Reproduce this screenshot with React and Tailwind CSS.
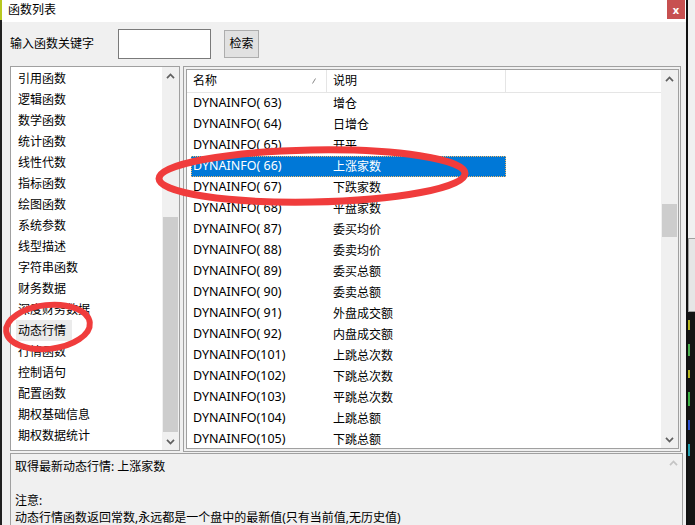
import React from "react";

const font = { fontFamily: '"Noto Sans", "Noto Sans CJK SC", sans-serif' };

const categories = [
  "引用函数",
  "逻辑函数",
  "数学函数",
  "统计函数",
  "线性代数",
  "指标函数",
  "绘图函数",
  "系统参数",
  "线型描述",
  "字符串函数",
  "财务数据",
  "深度财务数据",
  "动态行情",
  "行情函数",
  "控制语句",
  "配置函数",
  "期权基础信息",
  "期权数据统计",
];

const rows = [
  ["DYNAINFO( 63)", "增仓"],
  ["DYNAINFO( 64)", "日增仓"],
  ["DYNAINFO( 65)", "开平"],
  ["DYNAINFO( 66)", "上涨家数"],
  ["DYNAINFO( 67)", "下跌家数"],
  ["DYNAINFO( 68)", "平盘家数"],
  ["DYNAINFO( 87)", "委买均价"],
  ["DYNAINFO( 88)", "委卖均价"],
  ["DYNAINFO( 89)", "委买总额"],
  ["DYNAINFO( 90)", "委卖总额"],
  ["DYNAINFO( 91)", "外盘成交额"],
  ["DYNAINFO( 92)", "内盘成交额"],
  ["DYNAINFO(101)", "上跳总次数"],
  ["DYNAINFO(102)", "下跳总次数"],
  ["DYNAINFO(103)", "平跳总次数"],
  ["DYNAINFO(104)", "上跳总额"],
  ["DYNAINFO(105)", "下跳总额"],
];

function Chevron({ up, color = "#606060" }) {
  return (
    <svg width="9" height="6" viewBox="0 0 9 6">
      <path
        d={up ? "M1 5.2 L4.5 1.5 L8 5.2" : "M1 0.8 L4.5 4.5 L8 0.8"}
        fill="none"
        stroke={color}
        strokeWidth="1.7"
      />
    </svg>
  );
}

function ScrollBar({ spacer, thumb }) {
  return (
    <div className="w-[17px] h-full bg-[#f0f0f0] flex flex-col shrink-0">
      <div className="h-[17px] flex items-center justify-center">
        <Chevron up />
      </div>
      <div className="flex-1 flex flex-col">
        <div className={spacer} />
        <div className={"mx-[1px] bg-[#cdcdcd] " + thumb} />
      </div>
      <div className="h-[17px] flex items-center justify-center">
        <Chevron />
      </div>
    </div>
  );
}

export default function App() {
  return (
    <div
      className="relative w-[695px] h-[525px] overflow-hidden flex text-[12px] text-black bg-[#f0f0f0]"
      style={font}
    >
      {/* left edge of the desktop behind */}
      <div className="w-[2px] h-full flex flex-col">
        <div className="h-[20px] bg-[#b8c820]" />
        <div className="flex-1 bg-[#202020]" />
      </div>

      {/* dialog window */}
      <div className="w-[684px] h-full flex flex-col">
        {/* title bar */}
        <div className="h-[22px] bg-white flex items-start justify-between shrink-0">
          <span className="pl-[6px] pt-[1px] leading-[18px]">函数列表</span>
          <div className="w-[18px] h-[19px] mr-[1px] bg-[#c75050] flex items-center justify-center text-white font-bold text-[11px] leading-none">
            x
          </div>
        </div>

        {/* search row */}
        <div className="h-[44px] flex items-center pl-[8px] shrink-0">
          <span className="w-[108px]">输入函数关键字</span>
          <div className="w-[93px] h-[30px] bg-white border border-[#7a7a7a]" />
          <button className="ml-[13px] w-[35px] h-[28px] bg-[#e1e1e1] border border-[#adadad] text-[12px]">
            检索
          </button>
        </div>

        {/* panels */}
        <div className="h-[387px] flex items-start pl-[8px] gap-[3px] shrink-0">
          {/* category list */}
          <div className="w-[170px] h-[385px] border border-[#a0a0a0] bg-white flex">
            <div className="flex-1 flex flex-col overflow-hidden pt-[1px]">
              {categories.map((c) => (
                <div key={c} className="h-[21px] shrink-0 flex items-center pl-[5px]">
                  <span
                    className={
                      "pl-[2px] pr-[6px] leading-[21px] " +
                      (c === "动态行情" ? "bg-[#ebebeb]" : "")
                    }
                  >
                    {c}
                  </span>
                </div>
              ))}
            </div>
            <ScrollBar spacer="h-[133px]" thumb="h-[215px]" />
          </div>

          {/* function list */}
          <div className="w-[498px] h-[386px] border border-[#a0a0a0] pt-[2px] pl-[2px] pr-[1px] pb-[2px]">
            <div className="w-full h-full border border-[#a0a0a0] bg-white flex">
              <div className="flex-1 flex flex-col overflow-hidden">
                <div className="h-[23px] shrink-0 border-b border-[#e5e5e5] flex">
                  <div className="w-[140px] border-r border-[#e5e5e5] flex items-center justify-between pl-[6px] pr-[10px]">
                    <span>名称</span>
                    <svg width="4" height="6" viewBox="0 0 4 6">
                      <path d="M0.5 5.5 L3.5 0.5" stroke="#888" strokeWidth="1" />
                    </svg>
                  </div>
                  <div className="w-[179px] border-r border-[#e5e5e5] flex items-center pl-[6px]">
                    说明
                  </div>
                  <div className="flex-1" />
                </div>
                {rows.map(([name, desc]) => {
                  const sel = name === "DYNAINFO( 66)";
                  return (
                    <div key={name} className="h-[21px] shrink-0 flex">
                      <div
                        className={
                          "ml-[4px] w-[315px] h-full flex items-center " +
                          (sel
                            ? "bg-[#0078d7] text-white outline outline-1 outline-dotted outline-[#f2b766] -outline-offset-1"
                            : "")
                        }
                      >
                        <span className="w-[136px] pl-[2px] whitespace-pre text-[12.5px]">{name}</span>
                        <span className="pl-[6px]">{desc}</span>
                      </div>
                    </div>
                  );
                })}
              </div>
              <ScrollBar spacer="h-[117px]" thumb="h-[33px]" />
            </div>
          </div>
        </div>

        {/* description */}
        <div className="ml-[8px] w-[673px] h-[80px] border border-[#a0a0a0] bg-[#f0f0f0] flex shrink-0">
          <div className="flex-1 pl-[4px] pt-[4px] leading-[17px]">
            <div>取得最新动态行情: 上涨家数</div>
            <div>&nbsp;</div>
            <div>注意:</div>
            <div>动态行情函数返回常数,永远都是一个盘中的最新值(只有当前值,无历史值)</div>
          </div>
          <div className="w-[17px] h-[17px] flex items-center justify-center">
            <Chevron up color="#c4c4c4" />
          </div>
        </div>
      </div>

      {/* window edge and desktop behind */}
      <div className="w-[2px] h-full bg-[#101010]" />
      <div className="flex-1 h-full flex flex-col">
        <div className="h-[238px] bg-[#f0f0f0]" />
        <div className="h-[74px] bg-[#e6e6e6] border-y border-l border-[#a0a0a0]" />
        <div className="flex-1 bg-[#141414] flex flex-col gap-[14px] pt-[8px]">
          <div className="w-[2px] h-[10px] bg-[#b5b520]" />
          <div className="w-[2px] h-[12px] bg-[#4caf50]" />
          <div className="w-[2px] h-[8px] bg-[#b5b520]" />
          <div className="w-[2px] h-[14px] bg-[#3cb043]" />
          <div className="w-[2px] h-[10px] bg-[#2a4fd0]" />
          <div className="w-[2px] h-[12px] bg-[#20a0b0]" />
        </div>
      </div>

      {/* red annotation marks */}
      <svg
        className="absolute inset-0 pointer-events-none"
        width="695"
        height="525"
        viewBox="0 0 695 525"
      >
        <ellipse
          cx="312"
          cy="176"
          rx="153"
          ry="26"
          fill="none"
          stroke="#f03c3c"
          strokeWidth="7"
          transform="rotate(-1 312 176)"
        />
        <ellipse
          cx="48"
          cy="327"
          rx="42"
          ry="22"
          fill="none"
          stroke="#f03c3c"
          strokeWidth="6"
          transform="rotate(-6 48 327)"
        />
      </svg>
    </div>
  );
}
